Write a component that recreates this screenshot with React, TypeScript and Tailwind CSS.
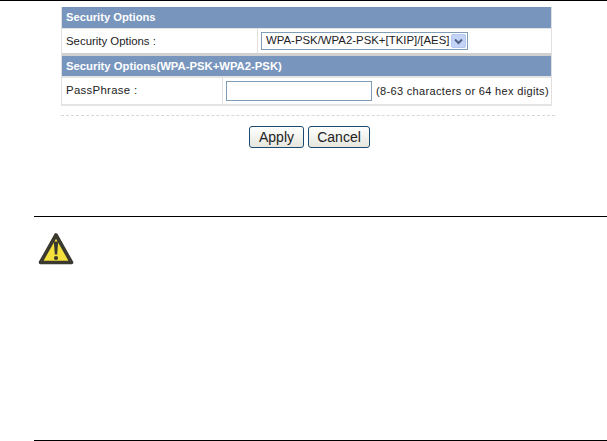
export default function App() {
  return (
    <div className="w-[607px] h-[441px] bg-white overflow-hidden flex flex-col font-['Liberation_Sans',Arial,sans-serif] text-[11.4px] text-[#222]">
      <div className="h-px bg-black" />
      <div className="ml-[61px] w-[491px] mt-[6px] border-x border-[#e0e0e0]">
        <div className="h-[21px] bg-[#7895bd] text-white font-bold flex items-center pl-1 text-[11.2px]">Security Options</div>
        <div className="h-[25px] flex border-t border-[#e4e4e4]">
          <div className="w-[196px] shrink-0 border-r border-[#e0e0e0] flex items-center pl-1 pt-[2px]">Security Options :</div>
          <div className="flex items-center pl-[3px]">
            <div className="w-[207px] h-[18px] border border-[#7f9db9] flex items-center justify-between pl-[4px] pr-[1px]">
              <span className="whitespace-nowrap">WPA-PSK/WPA2-PSK+[TKIP]/[AES]</span>
              <span className="w-[15px] h-[14px] rounded-[2px] bg-[#c3d3f7] border border-[#b5c7ee] flex items-center justify-center">
                <svg width="9" height="7" viewBox="0 0 9 7"><path d="M1 1.5 L4.5 5 L8 1.5" fill="none" stroke="#4d6185" strokeWidth="2" /></svg>
              </span>
            </div>
          </div>
        </div>
        <div className="h-[3px] bg-[#d0d0d0]" />
        <div className="h-[20px] bg-[#7895bd] text-white font-bold flex items-center pl-1 text-[11.3px]">Security Options(WPA-PSK+WPA2-PSK)</div>
        <div className="h-[30px] flex border-y-2 border-[#e4e4e4]">
          <div className="w-[161px] shrink-0 border-r border-[#e0e0e0] flex items-center pl-1 tracking-[0.3px]">PassPhrase :</div>
          <div className="flex items-center pl-[3px]">
            <div className="w-[146px] h-[20px] shrink-0 border border-[#7f9db9]" />
            <span className="ml-[4px] whitespace-nowrap tracking-[0.34px] text-[11px]">(8-63 characters or 64 hex digits)</span>
          </div>
        </div>
      </div>
      <div className="ml-[61px] w-[494px] mt-[9px] border-t border-dashed border-[#d8d8d8]" />
      <div className="ml-[249px] mt-[10px] flex gap-[4px]">
        <button className="w-[55px] h-[22px] rounded-[3px] border border-[#1c4a70] bg-gradient-to-b from-white to-[#e6e6de] text-[14px] text-[#222] font-['Liberation_Sans',sans-serif]">Apply</button>
        <button className="w-[62px] h-[22px] rounded-[3px] border border-[#1c4a70] bg-gradient-to-b from-white to-[#e6e6de] text-[14px] text-[#222] font-['Liberation_Sans',sans-serif]">Cancel</button>
      </div>
      <div className="ml-[34px] mt-[68px] h-px bg-black" />
      <div className="ml-[38px] mt-[15px] h-[208px]">
        <svg width="36" height="34" viewBox="0 0 36 34">
          <path d="M18 3 L33.5 30.5 H2.5 Z" fill="#f5e13c" stroke="#3a3a30" strokeWidth="3.6" strokeLinejoin="round" />
          <path d="M15.8 9.5 H20.2 L19.2 22.5 H16.8 Z" fill="#3a3a30" />
          <circle cx="18" cy="26" r="2.1" fill="#3a3a30" />
        </svg>
      </div>
      <div className="ml-[34px] h-px bg-black" />
    </div>
  );
}
